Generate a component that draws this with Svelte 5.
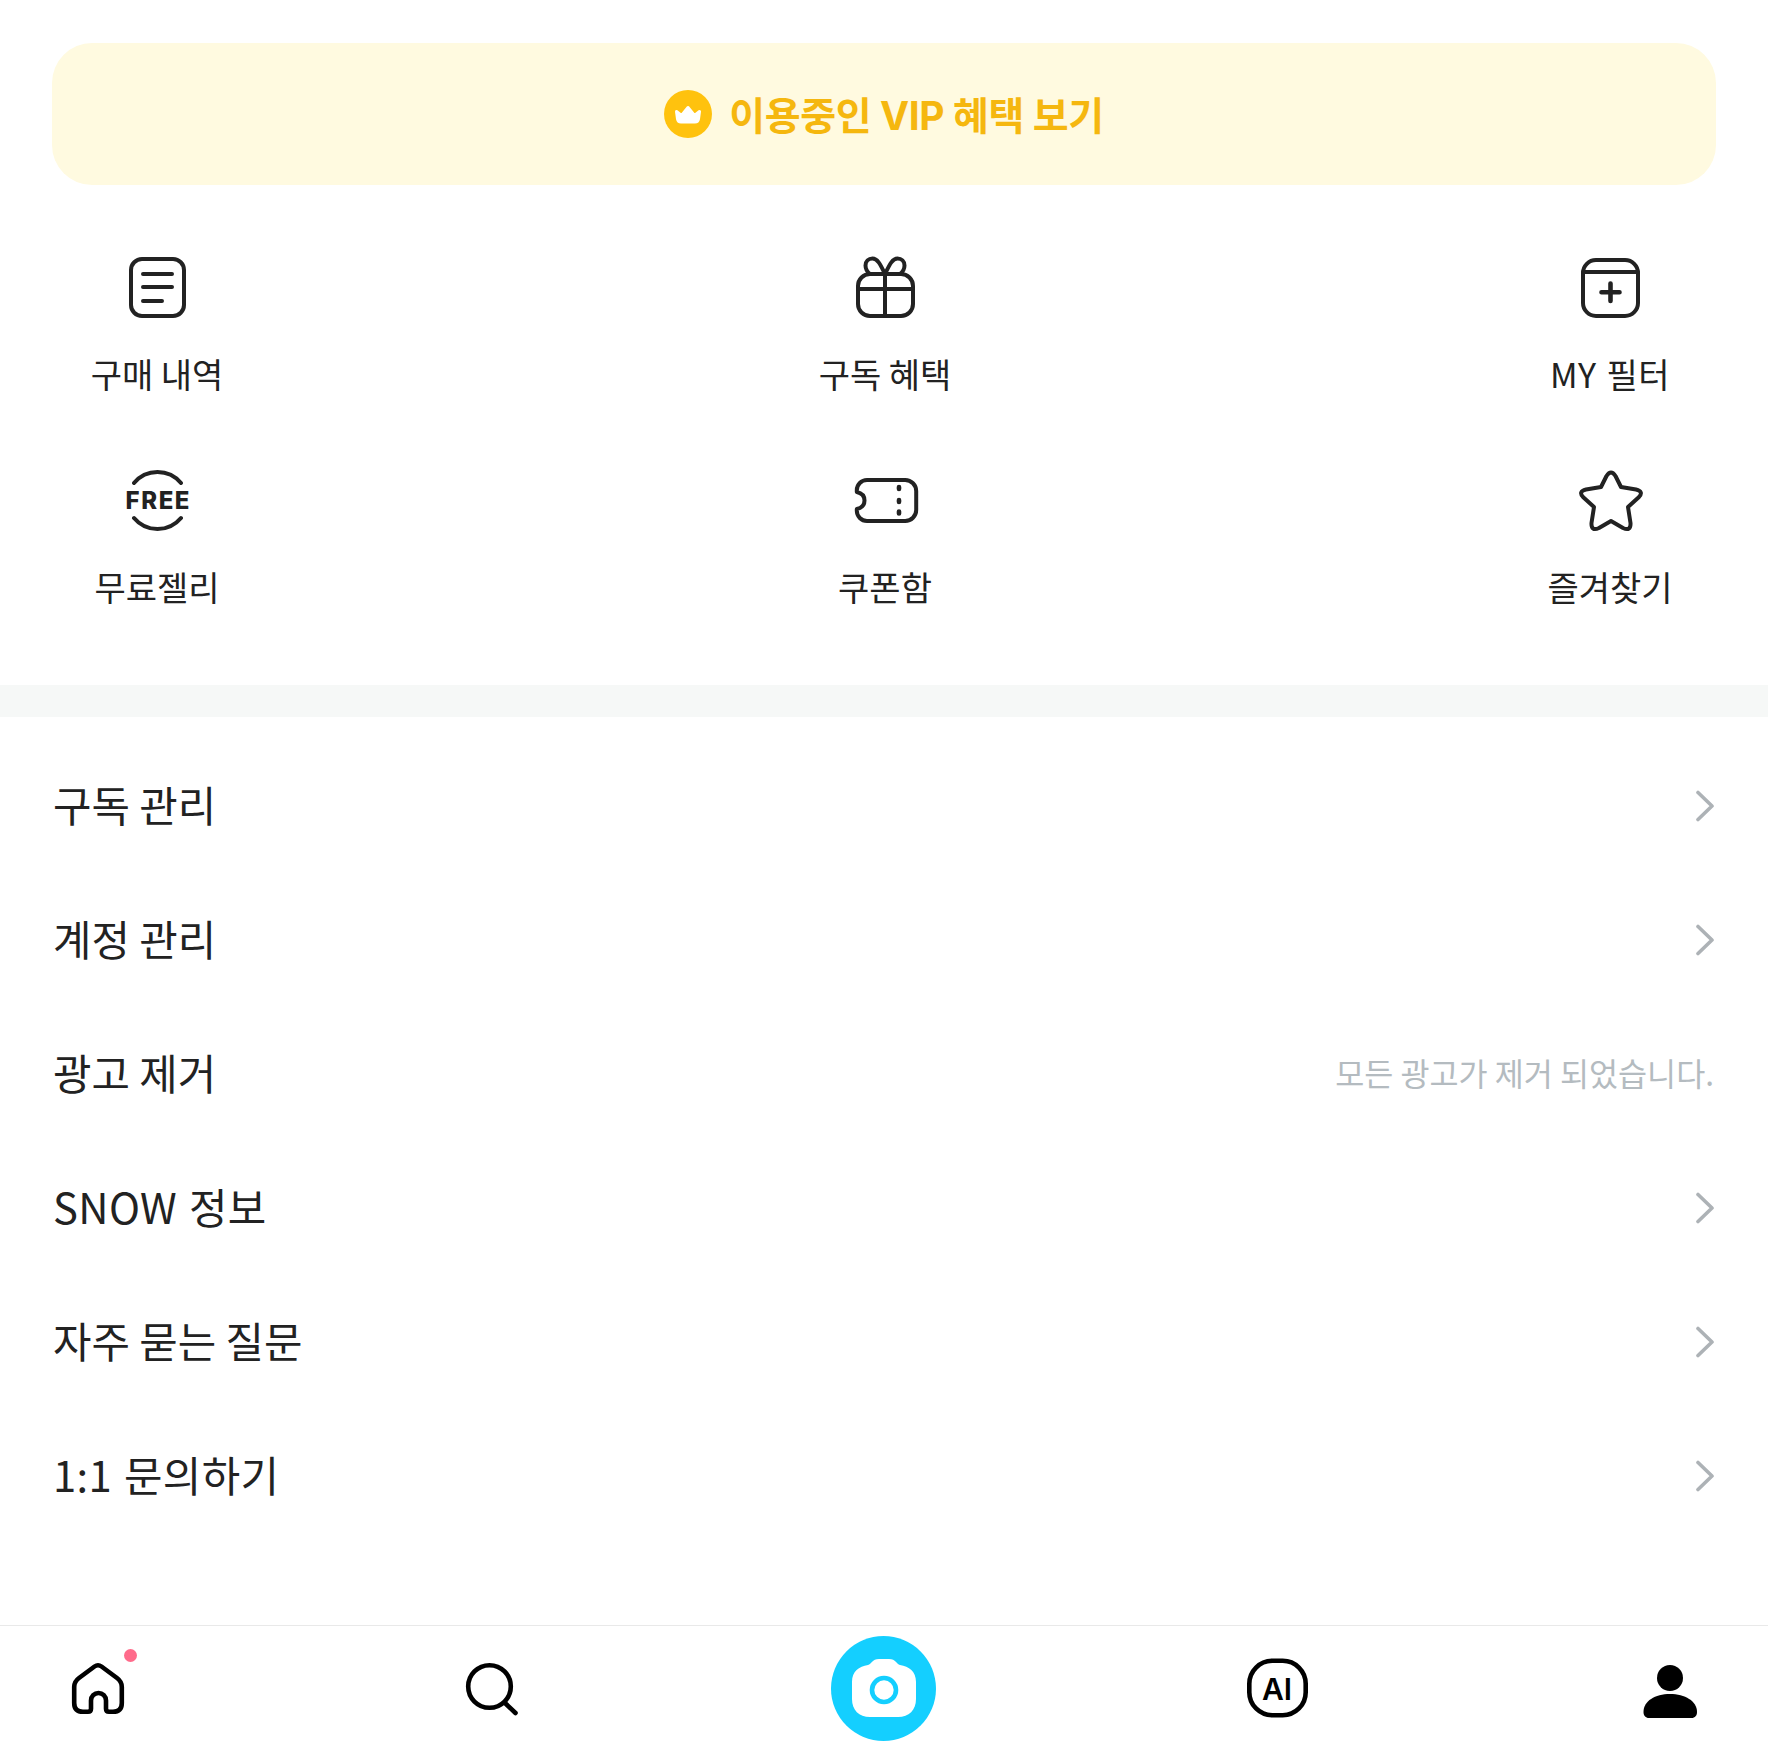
<script lang="ts">
    const shortcuts = [
        { id: "orders", label: "구매 내역" },
        { id: "gift", label: "구독 혜택" },
        { id: "filter", label: "MY 필터", latin: true },
        { id: "free", label: "무료젤리" },
        { id: "coupon", label: "쿠폰함" },
        { id: "star", label: "즐겨찾기" },
    ];

    const rows = [
        { label: "구독 관리" },
        { label: "계정 관리" },
        { label: "광고 제거", note: "모든 광고가 제거 되었습니다." },
        { label: "SNOW 정보", latin: true },
        { label: "자주 묻는 질문" },
        { label: "1:1 문의하기", latin: true },
    ];
</script>

<main class="page">
    <button class="banner" type="button">
        <svg class="crown" width="48" height="48" viewBox="0 0 48 48" aria-hidden="true">
            <circle cx="24" cy="24" r="24" fill="#ffc20e" />
            <path d="M12.5 21.5L17.5 25.5L24 17.5L30.5 25.5L35.5 21.5L34.5 29Q34 32 31 32H17Q14 32 13.5 29Z" fill="#fff" stroke="#fff" stroke-width="3" stroke-linejoin="round" />
        </svg>
        <span>이용중인 VIP 혜택 보기</span>
    </button>

    <section class="shortcuts">
        {#each shortcuts as item (item.id)}
            <button class="shortcut" type="button">
                <svg width="70" height="70" viewBox="0 0 70 70" fill="none" stroke="#222" stroke-width="4" stroke-linecap="round" stroke-linejoin="round" aria-hidden="true">
                    {#if item.id === "orders"}
                        <rect x="9" y="7" width="53" height="57" rx="11" />
                        <path d="M21 22H50M21 35H50M21 49H40" />
                    {:else if item.id === "gift"}
                        <rect x="8" y="22" width="55" height="42" rx="12" />
                        <path d="M8 37H63M35 22V64" />
                        <path d="M35 22C31 14 28 6.5 22.5 6.5C18.5 6.5 15.5 9.5 15.5 13.5C15.5 17 17.5 20 20 22" />
                        <path d="M35 22C39 14 42 6.5 47.5 6.5C51.5 6.5 54.5 9.5 54.5 13.5C54.5 17 52.5 20 50 22" />
                    {:else if item.id === "filter"}
                        <rect x="8" y="8" width="55" height="56" rx="13" />
                        <path d="M8 20H63" />
                        <path d="M35.5 31.5V49M26.5 40.3H44.5" stroke-width="4.6" />
                    {:else if item.id === "free"}
                        <path d="M12 18A30.6 30.6 0 0 1 59 18M12 53A30.6 30.6 0 0 0 59 53" />
                        <text class="free-text" x="3.5" y="44" textLength="64">FREE</text>
                    {:else if item.id === "coupon"}
                        <path d="M17 15H55.2A11 11 0 0 1 66.2 26V45A11 11 0 0 1 55.2 56H17A10.2 10.2 0 0 1 6.8 45.8V44C11.5 43 14.5 40 14.5 35.5C14.5 31 11.5 28 6.8 27V25.2A10.2 10.2 0 0 1 17 15Z" />
                        <path d="M49 22V24M49 35V37M49 46.5V48.5" stroke-width="4.6" />
                    {:else}
                        <path d="M31.5 11Q36 4 40.5 11L46 22L61 24.5Q69 26.5 64 32L53 42L55.5 58Q56 66.5 48 63L36 56L24 63Q16 66.5 16.5 58L19 42L8 32Q3 26.5 11 24.5L26 22Z" />
                    {/if}
                </svg>
                <span class:latin={item.latin}>{item.label}</span>
            </button>
        {/each}
    </section>

    <div class="divider"></div>

    <ul class="menu">
        {#each rows as row (row.label)}
            <li class="row">
                <span class="row-label" class:latin={row.latin}>{row.label}</span>
                {#if row.note}
                    <span class="row-note">{row.note}</span>
                {:else}
                    <svg width="18" height="32" viewBox="0 0 18 32" fill="none" stroke="#adb2b6" stroke-width="3.6" stroke-linecap="round" stroke-linejoin="round" aria-hidden="true">
                        <path d="M2 2.5L16 16L2 29.5" />
                    </svg>
                {/if}
            </li>
        {/each}
    </ul>

    <nav class="tabbar">
        <button class="tab" type="button" aria-label="홈">
            <span class="home">
                <svg width="70" height="70" viewBox="0 0 70 70" fill="none" stroke="#000" stroke-width="4.6" stroke-linejoin="round" aria-hidden="true">
                    <path d="M31.5 12.5Q35 10 38.5 12.5L54 24Q58.8 27.5 58.8 33V49Q58.8 57.8 50 57.8H46Q43 57.8 43 54.8V46.5A7.5 7.5 0 0 0 28 46.5V54.8Q28 57.8 25 57.8H20Q11.2 57.8 11.2 49V33Q11.2 27.5 16 24Z" />
                </svg>
                <i class="dot"></i>
            </span>
        </button>
        <button class="tab" type="button" aria-label="검색">
            <svg width="70" height="70" viewBox="0 0 70 70" fill="none" stroke="#000" stroke-width="4.6" stroke-linecap="round" aria-hidden="true">
                <circle cx="33.5" cy="32.5" r="21.3" />
                <path d="M49 49L59.5 59" />
            </svg>
        </button>
        <button class="tab" type="button" aria-label="카메라">
            <svg class="camera" width="105" height="105" viewBox="0 0 105 105" aria-hidden="true">
                <circle cx="52.5" cy="52.5" r="52.5" fill="#14cfff" />
                <path d="M37 29C40.5 28 41 23 48 23H58C65 23 65.5 28 69 29C78 30.5 85 35 85 46V63C85 74 78 81 67 81H39C28 81 21 74 21 63V46C21 35 28 30.5 37 29Z" fill="#fff" />
                <circle cx="53" cy="54" r="12" fill="#fff" stroke="#14cfff" stroke-width="4.6" />
            </svg>
        </button>
        <button class="tab" type="button" aria-label="AI">
            <svg width="70" height="70" viewBox="0 0 70 70" fill="none" stroke="#000" stroke-width="4.6" aria-hidden="true">
                <rect x="7.3" y="6.8" width="56.4" height="54.4" rx="23" />
                <text class="ai-text" x="35" y="45.5" text-anchor="middle">AI</text>
            </svg>
        </button>
        <button class="tab" type="button" aria-label="내 정보">
            <svg width="70" height="70" viewBox="0 0 70 70" fill="#000" aria-hidden="true">
                <circle cx="35" cy="24" r="13" />
                <path d="M8.5 58C8.5 47 20 40 35 40C50 40 62 47 62 58C62 61.5 60 64 56.5 64H14C10.5 64 8.5 61.5 8.5 58Z" />
            </svg>
        </button>
    </nav>
</main>

<style>
    :global(body) {
        margin: 0;
        background: #fff;
    }

    .page {
        display: flex;
        flex-direction: column;
        height: 1751px;
        font-family: "Noto Sans CJK KR", "Noto Sans", sans-serif;
        color: #222;
    }

    button {
        border: 0;
        padding: 0;
        background: none;
        font: inherit;
        color: inherit;
    }

    .banner {
        display: flex;
        align-items: center;
        justify-content: center;
        gap: 17px;
        height: 142px;
        margin: 43px 52px 0;
        border-radius: 40px;
        background: #fffae0;
        color: #f5b70f;
        font-family: Inter, "Noto Sans CJK KR", sans-serif;
        font-size: 39px;
        font-weight: 700;
        letter-spacing: -0.4px;
    }

    .banner span {
        margin-bottom: 2px;
    }

    .shortcuts {
        display: grid;
        grid-template-columns: 200px 1256px 194px;
        row-gap: 66px;
        padding: 67px 0 73px 57px;
    }

    .shortcut {
        display: flex;
        flex-direction: column;
        align-items: center;
        font-size: 34px;
        line-height: 50px;
    }

    .shortcut span {
        margin-top: 27px;
    }

    .latin {
        letter-spacing: 0.4px;
        word-spacing: 2px;
    }

    .free-text {
        font-family: Inter, sans-serif;
        font-size: 24px;
        font-weight: 800;
        fill: #222;
        stroke: none;
    }

    .divider {
        height: 32px;
        background: #f6f8f7;
    }

    .menu {
        margin: 22px 0 0;
        padding: 0;
        list-style: none;
    }

    .row {
        display: flex;
        align-items: center;
        justify-content: space-between;
        height: 134px;
        padding: 0 54px 0 53px;
        font-size: 41.8px;
    }

    .row-label,
    .row-note {
        margin-bottom: 5px;
    }

    .row-note {
        color: #b4bbc0;
        font-size: 31.6px;
    }

    .tabbar {
        display: flex;
        align-items: center;
        justify-content: space-between;
        margin-top: auto;
        height: 125px;
        padding: 0 40px;
        border-top: 1px solid #e9e9e9;
    }

    .tab {
        display: flex;
        align-items: center;
        justify-content: center;
        width: 116px;
    }

    .tab svg {
        display: block;
    }

    .tab .camera {
        margin-right: 2px;
    }

    .home {
        position: relative;
        display: block;
    }

    .dot {
        position: absolute;
        top: -5px;
        left: 61px;
        width: 13px;
        height: 13px;
        border-radius: 50%;
        background: #ff6b8b;
    }

    .ai-text {
        font-family: Inter, sans-serif;
        font-size: 30px;
        font-weight: 600;
        fill: #000;
        stroke: none;
    }
</style>
